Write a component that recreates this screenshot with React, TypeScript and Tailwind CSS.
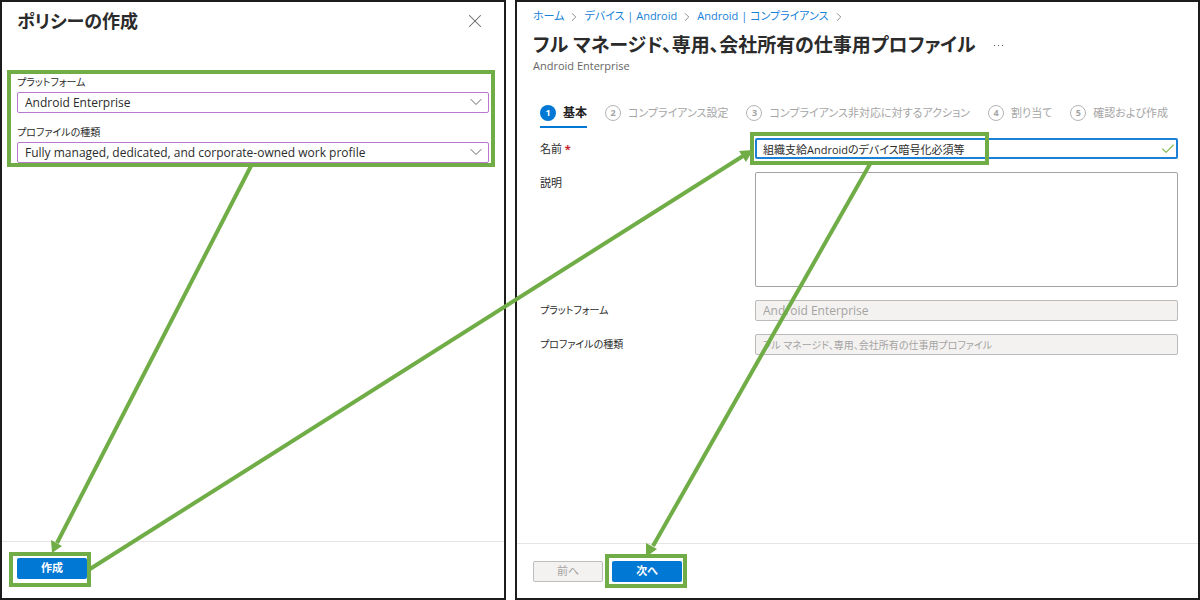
import { useState } from 'react';
import { Check, ChevronDown, ChevronRight, X } from 'lucide-react';

interface HighlightProps {
  className: string;
}

function Highlight({ className }: HighlightProps) {
  return <span className={`absolute border-4 border-[#70ad47] pointer-events-none ${className}`} />;
}

interface SelectFieldProps {
  id: string;
  label: string;
  options: string[];
}

function SelectField({ id, label, options }: SelectFieldProps) {
  return (
    <div>
      <label htmlFor={id} className="block h-[18px] text-[10px] leading-[16px]">{label}</label>
      <div className="relative">
        <select
          id={id}
          className="block w-full h-[21px] pl-[7px] pr-7 appearance-none bg-white border border-[#b878d0] rounded-xs outline-none text-[12px]"
        >
          {options.map((option) => (
            <option key={option}>{option}</option>
          ))}
        </select>
        <ChevronDown
          size={20}
          strokeWidth={1.2}
          className="absolute right-[3px] top-0 text-[#666] pointer-events-none"
        />
      </div>
    </div>
  );
}

const crumbs = ['ホーム', 'デバイス | Android', 'Android | コンプライアンス'];

const steps = ['基本', 'コンプライアンス設定', 'コンプライアンス非対応に対するアクション', '割り当て', '確認および作成'];

const primaryButton = 'block w-[70px] h-[21px] rounded-xs bg-[#0078d4] text-white font-bold cursor-pointer';
const readonlyInput = 'flex-1 min-w-0 h-[21px] px-[7px] bg-[#f3f2f1] border border-[#bdbbb9] rounded-xs text-[#a5a3a1]';
const fieldLabel = 'w-[215px] shrink-0 leading-[21px]';

function CreatePolicyPanel() {
  return (
    <section className="flex flex-col bg-white border-2 border-[#1c1c1c]">
      <header className="flex items-center justify-between pl-[15px] pr-[18px] h-[38px]">
        <h1 className="text-[18px] leading-[28px] font-bold">ポリシーの作成</h1>
        <button aria-label="閉じる" className="text-[#666] cursor-pointer">
          <X size={22} strokeWidth={1.1} />
        </button>
      </header>

      <div className="relative flex flex-col gap-[11px] mt-[34px] ml-[15px] mr-[15px]">
        <SelectField id="platform" label="プラットフォーム" options={['Android Enterprise']} />
        <SelectField
          id="profile-type"
          label="プロファイルの種類"
          options={['Fully managed, dedicated, and corporate-owned work profile']}
        />
        <Highlight className="-top-1 -bottom-1 -left-[10px] -right-[6px]" />
      </div>

      <footer className="mt-auto border-t border-[#e5e5e5] pt-4 pb-[19px] pl-[15px]">
        <div className="relative w-fit">
          <button className={primaryButton}>作成</button>
          <Highlight className="-top-[6px] -bottom-2 -left-2 -right-1" />
        </div>
      </footer>
    </section>
  );
}

function WizardPanel() {
  const [name, setName] = useState('組織支給Androidのデバイス暗号化必須等');
  const [description, setDescription] = useState('');

  return (
    <section className="flex flex-col bg-white border-2 border-[#1c1c1c]">
      <nav className="flex items-center gap-[3px] h-[29px] pl-4 text-[#1581d8]">
        {crumbs.map((crumb) => (
          <span key={crumb} className="flex items-center gap-[3px] whitespace-nowrap">
            <a href="#">{crumb}</a>
            <ChevronRight size={14} strokeWidth={1.6} className="text-[#888]" />
          </span>
        ))}
      </nav>

      <header className="pl-4">
        <div className="flex items-center gap-[18px]">
          <h1 className="text-[19px] leading-[28px] font-bold whitespace-nowrap">
            フル マネージド、専用、会社所有の仕事用プロファイル
          </h1>
          <button aria-label="その他" className="flex gap-[3px] cursor-pointer">
            <span className="size-px bg-[#555]" />
            <span className="size-px bg-[#555]" />
            <span className="size-px bg-[#555]" />
          </button>
        </div>
        <p className="leading-[14px] text-[#666]">Android Enterprise</p>
      </header>

      <ol className="flex gap-[18px] mt-8 ml-[23px] text-[#a5a5a5]">
        {steps.map((step, i) => (
          <li
            key={step}
            className={`flex gap-[7px] h-[23px] leading-4 whitespace-nowrap ${i === 0 ? 'border-b-2 border-[#0078d4] text-[12px] text-[#222] font-bold' : ''}`}
          >
            <span
              className={`flex items-center justify-center size-4 rounded-full text-[9px] font-bold ${i === 0 ? 'bg-[#0078d4] text-white' : 'border border-[#b5b5b5]'}`}
            >
              {i + 1}
            </span>
            {step}
          </li>
        ))}
      </ol>

      <form className="flex flex-col gap-[13px] mt-[10px] ml-[23px] mr-5">
        <div className="flex">
          <label htmlFor="name" className={fieldLabel}>
            名前 <span className="font-bold text-[#c4262c]">*</span>
          </label>
          <div className="relative flex-1">
            <input
              id="name"
              value={name}
              onChange={(e) => setName(e.target.value)}
              className="block w-full h-[21px] pl-[6px] pr-6 border-2 border-[#1b80d6] rounded-xs outline-none"
            />
            <Check size={16} strokeWidth={1.6} className="absolute right-[2px] top-[3px] text-[#7fba4c]" />
            <Highlight className="-top-[6px] -bottom-[6px] -left-[5px] w-[239px]" />
          </div>
        </div>
        <div className="flex">
          <label htmlFor="description" className={fieldLabel}>説明</label>
          <textarea
            id="description"
            value={description}
            onChange={(e) => setDescription(e.target.value)}
            className="flex-1 min-w-0 h-[115px] px-[7px] border border-[#a5a3a1] rounded-xs resize-none outline-none"
          />
        </div>
        <div className="flex">
          <label htmlFor="fixed-platform" className={`${fieldLabel} text-[10px]`}>プラットフォーム</label>
          <input id="fixed-platform" disabled value="Android Enterprise" className={`${readonlyInput} text-[12px]`} />
        </div>
        <div className="flex">
          <label htmlFor="fixed-profile" className={`${fieldLabel} text-[10px]`}>プロファイルの種類</label>
          <input
            id="fixed-profile"
            disabled
            value="フル マネージド、専用、会社所有の仕事用プロファイル"
            className={`${readonlyInput} text-[10px]`}
          />
        </div>
      </form>

      <footer className="flex gap-[9px] mt-auto border-t border-[#e5e5e5] pt-[17px] pb-4 pl-4">
        <button disabled className="w-[70px] h-[21px] rounded-xs border border-[#c0bebc] bg-[#f3f2f1] text-[#a5a3a1]">
          前へ
        </button>
        <div className="relative">
          <button className={primaryButton}>次へ</button>
          <Highlight className="-top-[7px] -bottom-[6px] -left-[7px] -right-[5px]" />
        </div>
      </footer>
    </section>
  );
}

function FlowArrows() {
  return (
    <svg
      viewBox="0 0 1200 600"
      preserveAspectRatio="none"
      className="absolute inset-0 w-full h-full pointer-events-none"
      fill="none"
      stroke="#70ad47"
      strokeWidth="4"
    >
      <g>
        <path d="M251 166 L57 543" />
        <path d="M90 569 L743 156" />
        <path d="M870 164 L653 546" />
      </g>
      <g fill="#70ad47" stroke="none">
        <path d="M52 553 L51 540 L62 546 Z" />
        <path d="M753 150 L739 151 L746 162 Z" />
        <path d="M646 557 L646 543 L657 549 Z" />
      </g>
    </svg>
  );
}

export default function App() {
  return (
    <main className="relative grid grid-cols-[minmax(0,506fr)_minmax(0,685fr)] gap-[9px] min-h-screen bg-white text-[11px] text-[#2b2b2b] font-['Open_Sans','Noto_Sans_CJK_JP',sans-serif] [font-feature-settings:'palt']">
      <CreatePolicyPanel />
      <WizardPanel />
      <FlowArrows />
    </main>
  );
}
